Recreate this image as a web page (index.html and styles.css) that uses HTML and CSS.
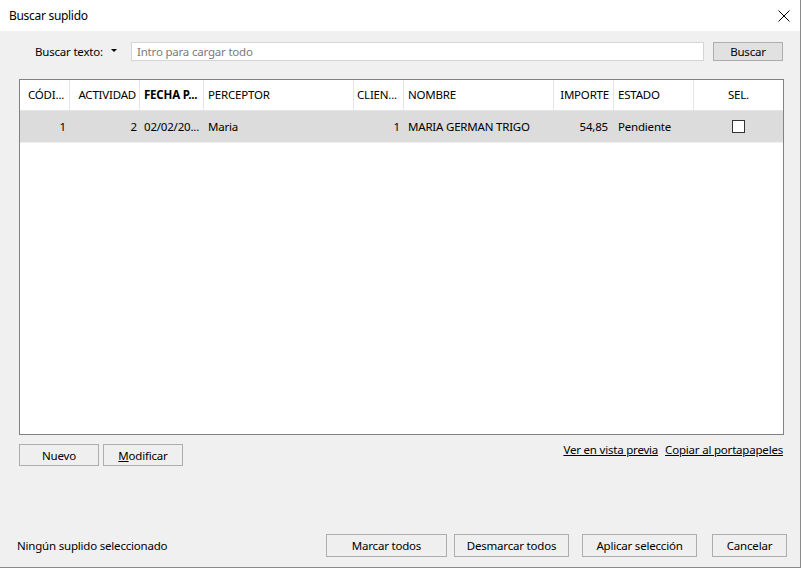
FILE: index.html
```html
<!DOCTYPE html>
<html lang="es">
<head>
<meta charset="utf-8">
<title>Buscar suplido</title>
<link rel="stylesheet" href="styles.css">
</head>
<body>
<div class="window">
  <div class="titlebar">
    <span class="title">Buscar suplido</span>
    <svg class="close" width="12" height="12" viewBox="0 0 12 12"><path d="M0.5 0.5 L11.5 11.5 M11.5 0.5 L0.5 11.5" stroke="#000" stroke-width="1" fill="none"/></svg>
  </div>
  <div class="content">
    <div class="search-row">
      <span class="search-label">Buscar texto:</span>
      <span class="drop-arrow"></span>
      <div class="search-input">Intro para cargar todo</div>
      <button class="btn btn-search">Buscar</button>
    </div>
    <div class="grid">
      <div class="grid-row header">
        <div class="cell c1">CÓDI...</div>
        <div class="cell c2 right">ACTIVIDAD</div>
        <div class="cell c3 bold">FECHA P...</div>
        <div class="cell c4">PERCEPTOR</div>
        <div class="cell c5">CLIEN...</div>
        <div class="cell c6">NOMBRE</div>
        <div class="cell c7 right">IMPORTE</div>
        <div class="cell c8">ESTADO</div>
        <div class="cell c9 center">SEL.</div>
      </div>
      <div class="grid-row data selected">
        <div class="cell c1 right">1</div>
        <div class="cell c2 right">2</div>
        <div class="cell c3">02/02/20...</div>
        <div class="cell c4">Maria</div>
        <div class="cell c5 right">1</div>
        <div class="cell c6">MARIA GERMAN TRIGO</div>
        <div class="cell c7 right">54,85</div>
        <div class="cell c8">Pendiente</div>
        <div class="cell c9 center"><span class="checkbox"></span></div>
      </div>
    </div>
    <div class="action-row">
      <button class="btn btn-small">Nuevo</button>
      <button class="btn btn-small"><u>M</u>odificar</button>
      <div class="links">
        <a class="link">Ver en vista previa</a>
        <a class="link">Copiar al portapapeles</a>
      </div>
    </div>
    <div class="footer-row">
      <span class="status">Ningún suplido seleccionado</span>
      <div class="footer-buttons">
        <button class="btn btn-marcar">Marcar todos</button>
        <button class="btn btn-desmarcar">Desmarcar todos</button>
        <button class="btn btn-aplicar">Aplicar selección</button>
        <button class="btn btn-cancelar">Cancelar</button>
      </div>
    </div>
  </div>
</div>
</body>
</html>
```
FILE: styles.css
```css
* { box-sizing: border-box; }
html, body { margin: 0; padding: 0; }
body {
  width: 801px;
  height: 568px;
  overflow: hidden;
  font-family: "Noto Sans", "Open Sans", sans-serif;
  font-size: 11.5px;
  letter-spacing: -0.2px;
  color: #000;
  background: #f0f0f0;
}
.window {
  width: 801px;
  height: 568px;
  display: flex;
  flex-direction: column;
  border-right: 1px solid #8a8a8a;
  border-bottom: 1px solid #8a8a8a;
  background: #f0f0f0;
}
.titlebar {
  height: 31px;
  flex: none;
  background: #fff;
  display: flex;
  align-items: center;
  justify-content: space-between;
  padding: 0 10px 0 9px;
}
.title { font-size: 12px; line-height: 16px; letter-spacing: -0.3px; }
.close { display: block; }
.content {
  flex: 1;
  display: flex;
  flex-direction: column;
  padding: 11px 0 0 0;
}
.search-row {
  display: flex;
  align-items: center;
  height: 18px;
  padding-left: 35px;
}
.search-label { width: 76px; flex: none; }
.drop-arrow {
  flex: none;
  width: 0;
  height: 0;
  border-left: 3px solid transparent;
  border-right: 3px solid transparent;
  border-top: 3px solid #000;
  margin-right: 14px;
  margin-top: -1px;
}
.search-input {
  width: 573px;
  height: 19px;
  border: 1px solid #d5d5d5;
  background: #fff;
  color: #7a7a7a;
  padding-left: 5px;
  line-height: 17px;
  margin-right: 9px;
  margin-top: 1px;
}
.btn {
  font-family: inherit;
  font-size: 11.5px;
  letter-spacing: -0.2px;
  color: #000;
  background: #efefef;
  border: 1px solid #adadad;
  padding: 0;
  margin: 0;
}
.btn-search {
  width: 70px;
  height: 19px;
  background: #e1e1e1;
  line-height: 17px;
  margin-top: 1px;
}
.grid {
  margin: 19px 0 0 19px;
  width: 765px;
  height: 356px;
  border: 1px solid #828282;
  background: #fff;
  flex: none;
}
.grid-row {
  display: grid;
  grid-template-columns: 50px 70px 64px 150px 50px 150px 60px 80px 1fr;
}
.header { height: 31px; border-bottom: 1px solid #e5e5e5; }
.header .cell { border-right: 1px solid #e5e5e5; padding-bottom: 1px; }
.header .c9 { border-right: none; }
.data { height: 32px; }
.selected { background: #dcdcdc; border-bottom: 1px solid #f0f0f0; }
.cell {
  display: flex;
  align-items: center;
  padding: 0 4px;
  white-space: nowrap;
  overflow: hidden;
}
.header .c1 { padding-left: 8px; }
.header .c2 { padding-right: 3px; }
.header .c5 { padding-left: 3px; }
.header .c7 { padding-right: 4px; }
.right { justify-content: flex-end; }
.center { justify-content: center; }
.bold { font-weight: bold; }
.data .c2 { padding-right: 3px; }
.data .c7 { padding-right: 6px; }
.checkbox {
  width: 13px;
  height: 13px;
  border: 1px solid #333;
  background: #fff;
}
.action-row {
  display: flex;
  align-items: center;
  margin: 9px 0 0 19px;
  width: 764px;
  height: 23px;
}
.btn-small { width: 80px; height: 22px; margin-right: 4px; align-self: flex-start; }
.links { margin-left: auto; display: flex; gap: 7px; align-self: flex-start; margin-top: -2px; line-height: 16px; }
.link { color: #000; text-decoration: underline; cursor: pointer; }
.footer-row {
  margin-top: auto;
  margin-bottom: 10px;
  display: flex;
  align-items: center;
  padding-left: 17px;
  height: 24px;
}
.status { flex: 1; }
.footer-buttons { display: flex; margin-right: 13px; }
.footer-buttons .btn { height: 23px; margin-top: 1px; }
.btn-marcar { width: 121px; margin-right: 7px; }
.btn-desmarcar { width: 115px; margin-right: 13px; }
.btn-aplicar { width: 115px; margin-right: 15px; }
.btn-cancelar { width: 75px; }
```
